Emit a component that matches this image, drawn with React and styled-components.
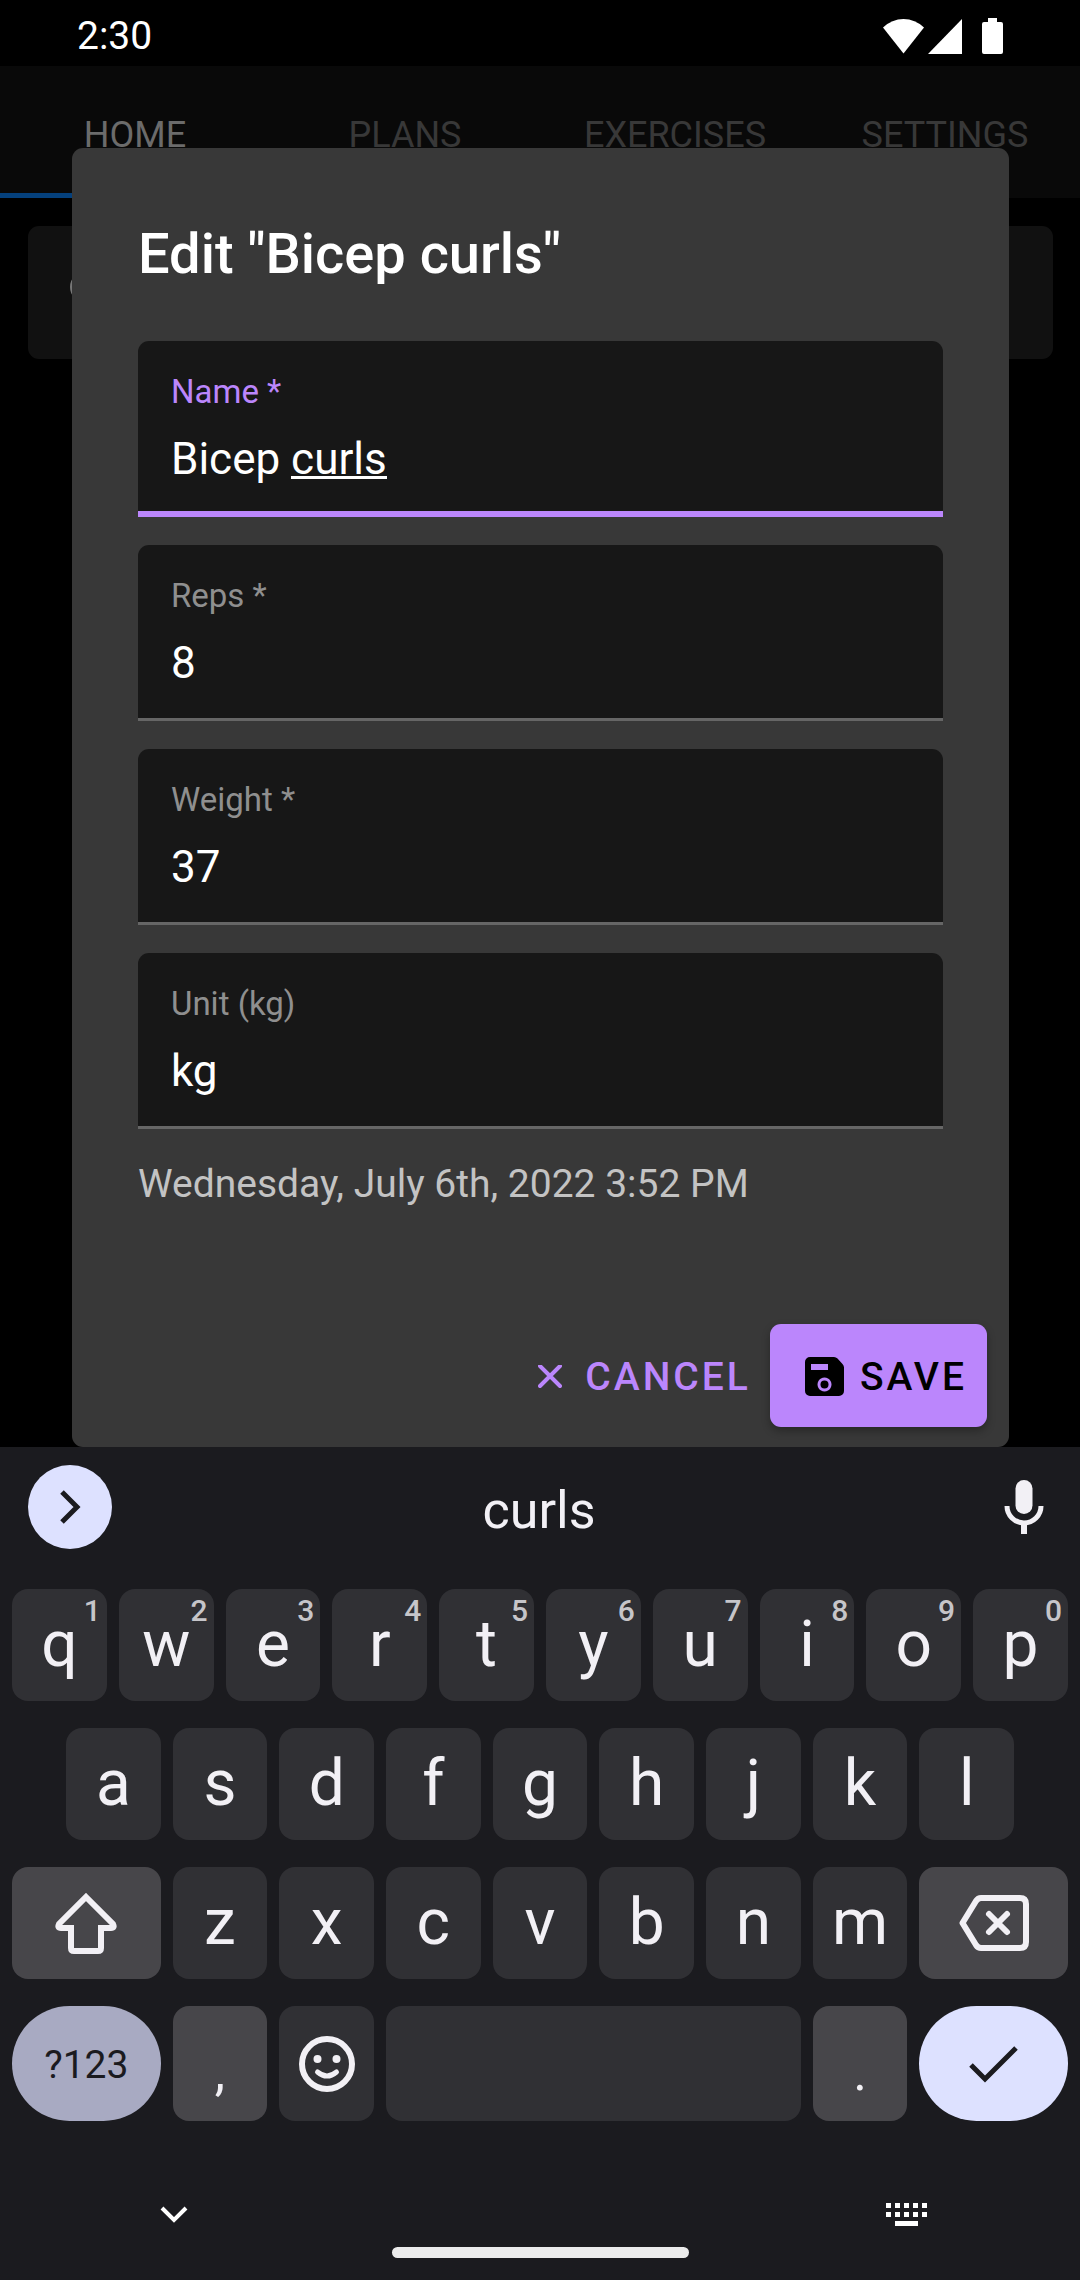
import React from "react";
import styled, { createGlobalStyle, css } from "styled-components";

const ui = `Roboto, "Liberation Sans", sans-serif`;

const Global = createGlobalStyle`
  *, *::before, *::after { box-sizing: border-box; }
  body { margin: 0; background: #000; font-family: ${ui}; }
  button, input { font: inherit; color: inherit; border: 0; padding: 0; margin: 0; background: none; }
  svg { display: block; flex: none; }
`;

const Screen = styled.div`
  display: flex;
  flex-direction: column;
  min-height: 100vh;
  background: #000;
`;

/* Status bar */
const StatusBar = styled.header`
  display: flex;
  align-items: center;
  justify-content: space-between;
  height: 66px;
  padding: 6px 76px 0 77px;
  color: #fff;
`;
const Clock = styled.time`
  font-size: 39px;
  line-height: 48px;
`;
const StatusIcons = styled.div`
  display: flex;
  align-items: center;
  height: 36px;
`;

/* The page and the dialog share one grid cell */
const Workspace = styled.main`
  flex: 1;
  display: grid;
  grid-template-columns: minmax(0, 1fr);
  > * { grid-area: 1 / 1; }
`;
const Page = styled.div`
  display: flex;
  flex-direction: column;
  gap: 28px;
`;
const Tabs = styled.nav`
  display: grid;
  grid-template-columns: repeat(4, 1fr);
  height: 132px;
  background: #090909;
`;
const Tab = styled.a`
  display: flex;
  align-items: center;
  justify-content: center;
  padding-top: 11px;
  border-bottom: 5px solid ${(p) => (p.$active ? "#05417d" : "transparent")};
  color: ${(p) => (p.$active ? "#6b6b6b" : "#383838")};
  font-size: 36px;
  text-decoration: none;
`;
const SearchCard = styled.div`
  display: flex;
  align-items: center;
  height: 133px;
  margin: 0 27px 0 28px;
  padding: 0 42px 10px;
  border-radius: 11px;
  background: #111;
  color: #777;
`;

/* Dialog */
const Dialog = styled.form`
  align-self: end;
  margin: 82px 71px 0 72px;
  padding: 76px 66px 20px;
  border-radius: 11px;
  background: #383838;
  color: #fff;
`;
const Title = styled.h1`
  margin: 0 0 57px;
  font-size: 56px;
  font-weight: 500;
  line-height: 60px;
`;
const Fields = styled.div`
  display: flex;
  flex-direction: column;
  gap: 28px;
`;
const Field = styled.label`
  display: flex;
  flex-direction: column;
  gap: 22px;
  padding: 32px 33px;
  border-radius: 11px 11px 0 0;
  background: #171717;
  box-shadow: inset 0 ${(p) => (p.$active ? "-6px #bb86fc" : "-3px #666")};
`;
const Caption = styled.span`
  color: ${(p) => (p.$active ? "#bb86fc" : "#8f8f8f")};
  font-size: 33px;
  line-height: 38px;
`;
const Control = styled.span`
  position: relative;
  display: block;
  font-size: 44px;
  line-height: 52px;
`;
const TextInput = styled.input`
  display: block;
  width: 100%;
  height: 52px;
  color: #fff;
  outline: none;
`;
const Composing = styled.span`
  position: absolute;
  inset: 0;
  color: transparent;
  white-space: pre;
  pointer-events: none;
  u {
    text-decoration: none;
    display: inline-block;
    height: 46px;
    border-bottom: 3px solid #fff;
  }
`;
const Timestamp = styled.p`
  margin: 31px 0 116px;
  color: #c3c3c3;
  font-size: 39px;
  line-height: 48px;
`;
const Actions = styled.div`
  display: flex;
  justify-content: flex-end;
  margin-right: -44px;
`;
const Action = styled.button`
  display: flex;
  align-items: center;
  height: 103px;
  border-radius: 11px;
  font-size: 39px;
  font-weight: 500;
  letter-spacing: 3px;
  ${(p) =>
    p.$filled
      ? css`
          gap: 16px;
          padding: 2px 20px 0 35px;
          background: #bb86fc;
          color: #000;
          box-shadow: 0 4px 8px rgba(0, 0, 0, 0.3);
        `
      : css`
          gap: 23px;
          padding: 2px 19px 0;
          color: #bb86fc;
        `}
`;

/* Keyboard */
const Keyboard = styled.section`
  display: flex;
  flex-direction: column;
  background: #1b1b1f;
  color: #f2f0f5;
`;
const Suggestions = styled.div`
  display: grid;
  grid-template-columns: 84px 1fr 84px;
  align-items: center;
  height: 142px;
  padding: 0 14px 22px 28px;
`;
const Expand = styled.button`
  display: grid;
  place-items: center;
  width: 84px;
  height: 84px;
  border-radius: 50%;
  background: #dde1ff;
  color: #1b1b1f;
`;
const Suggestion = styled.button`
  padding: 8px 16px 0 0;
  font-size: 52px;
  line-height: 60px;
`;
const Mic = styled.button`
  display: grid;
  place-items: center;
`;
const Rows = styled.div`
  display: flex;
  flex-direction: column;
  gap: 27px;
  padding: 0 12px;
`;
const Row = styled.div`
  display: flex;
  gap: 12px;
  height: ${(p) => (p.$tall ? 115 : 112)}px;
  padding: 0 ${(p) => (p.$inset ? 54 : 0)}px;
`;
const tones = {
  plain: css`background: #303034; color: #f2f0f5;`,
  grey: css`background: #47464a; color: #f2f0f5;`,
  mode: css`background: #a8aac2; color: #1b1b1f; border-radius: 58px;`,
  enter: css`background: #dde1ff; color: #1b1b1f; border-radius: 58px;`,
};
const Key = styled.button`
  position: relative;
  display: flex;
  align-items: center;
  justify-content: center;
  flex: ${(p) => p.$grow || 1} 1 ${(p) => (p.$space ? 36 : 0)}px;
  min-width: 0;
  border-radius: 16px;
  font-size: 64px;
  line-height: 72px;
  ${(p) => p.$small && css`padding-top: 3px; font-size: 39px;`}
  ${(p) => p.$low && css`padding-top: 18px; font-size: 52px;`}
  ${(p) => tones[p.$tone || "plain"]}
`;
const Hint = styled.sup`
  position: absolute;
  top: 4px;
  right: 6px;
  color: #c6c5c9;
  font-size: 30px;
  font-weight: 500;
  line-height: 36px;
`;
const NavBar = styled.footer`
  display: grid;
  grid-template-columns: 347px 1fr 347px;
  height: 159px;
  padding-top: 70px;
`;
const NavButton = styled.button`
  display: grid;
  place-items: center;
  height: 48px;
  color: #fff;
`;
const HomeHandle = styled.div`
  align-self: end;
  justify-self: center;
  width: 297px;
  height: 11px;
  margin-bottom: 22px;
  border-radius: 6px;
  background: #ececec;
`;

const fields = [
  { id: "name", label: "Name *", value: "Bicep curls", active: true, done: "Bicep ", composing: "curls" },
  { id: "reps", label: "Reps *", value: "8" },
  { id: "weight", label: "Weight *", value: "37" },
  { id: "unit", label: "Unit (kg)", value: "kg" },
];

const line = { fill: "none", stroke: "currentColor" };

export default function App() {
  return (
    <>
      <Global />
      <Screen>
        <StatusBar>
          <Clock>2:30</Clock>
          <StatusIcons>
            <svg width="121" height="36" viewBox="0 0 121 36" fill="currentColor">
              <path d="M0 9.5Q9 1 20.5 1T41 9.5L20.5 35.5Z" />
              <path d="M45 36L79 1V36Z" />
              <path d="M105 0h9v4h4a2 2 0 0 1 2 2v28a2 2 0 0 1-2 2h-17a2 2 0 0 1-2-2V6a2 2 0 0 1 2-2h4z" />
            </svg>
          </StatusIcons>
        </StatusBar>

        <Workspace>
          <Page>
            <Tabs>
              <Tab href="#home" $active>HOME</Tab>
              <Tab href="#plans">PLANS</Tab>
              <Tab href="#exercises">EXERCISES</Tab>
              <Tab href="#settings">SETTINGS</Tab>
            </Tabs>
            <SearchCard>
              <svg width="40" height="40" viewBox="0 0 40 40" {...line} strokeWidth="4">
                <circle cx="16" cy="19" r="14" />
                <path d="M26 29L37 40" />
              </svg>
            </SearchCard>
          </Page>

          <Dialog onSubmit={(e) => e.preventDefault()}>
            <Title>Edit "Bicep curls"</Title>
            <Fields>
              {fields.map((f) => (
                <Field key={f.id} htmlFor={f.id} $active={f.active}>
                  <Caption $active={f.active}>{f.label}</Caption>
                  <Control>
                    <TextInput id={f.id} defaultValue={f.value} spellCheck={false} />
                    {f.composing && (
                      <Composing aria-hidden="true">
                        {f.done}
                        <u>{f.composing}</u>
                      </Composing>
                    )}
                  </Control>
                </Field>
              ))}
            </Fields>
            <Timestamp>Wednesday, July 6th, 2022 3:52 PM</Timestamp>
            <Actions>
              <Action type="button">
                <svg width="24" height="24" viewBox="0 0 24 24" {...line} strokeWidth="4" strokeLinecap="round">
                  <path d="M2 1L22 21M22 1L2 21" />
                </svg>
                CANCEL
              </Action>
              <Action type="submit" $filled>
                <svg width="39" height="39" viewBox="0 0 39 39" fill="currentColor">
                  <path
                    fillRule="evenodd"
                    d="M5 0H29Q31 0 32.500 1.500L37.500 7Q39 8.500 39 10.500V34A5 5 0 0 1 34 39H5A5 5 0 0 1 0 34V5A5 5 0 0 1 5 0ZM6 7V13H23V7ZM19.500 20.500a7 7 0 1 0 .01 0Z"
                  />
                  <circle cx="19.500" cy="27.500" r="4" />
                </svg>
                SAVE
              </Action>
            </Actions>
          </Dialog>
        </Workspace>

        <Keyboard>
          <Suggestions>
            <Expand aria-label="More">
              <svg width="34" height="34" viewBox="0 0 34 34" {...line} strokeWidth="5">
                <path d="M9 2L24 17L9 32" />
              </svg>
            </Expand>
            <Suggestion>curls</Suggestion>
            <Mic aria-label="Voice input">
              <svg width="40" height="54" viewBox="0 0 40 54" fill="currentColor">
                <rect x="11.500" y="0" width="17" height="34" rx="8.500" />
                <path d="M3 26a17 17 0 0 0 34 0" {...line} strokeWidth="5" />
                <rect x="17" y="43" width="6" height="11" />
              </svg>
            </Mic>
          </Suggestions>

          <Rows>
            <Row>
              {[..."qwertyuiop"].map((c, i) => (
                <Key key={c}>
                  {c}
                  <Hint>{(i + 1) % 10}</Hint>
                </Key>
              ))}
            </Row>
            <Row $inset>
              {[..."asdfghjkl"].map((c) => (
                <Key key={c}>{c}</Key>
              ))}
            </Row>
            <Row>
              <Key $grow={1.57} $tone="grey" aria-label="Shift">
                <svg width="62" height="62" viewBox="0 0 62 62" {...line} strokeWidth="6" strokeLinejoin="round">
                  <path d="M31 5L58 32Q60 36 56 36H46V56Q46 59 43 59H19Q16 59 16 56V36H6Q2 36 4 32Z" strokeLinejoin="miter" />
                </svg>
              </Key>
              {[..."zxcvbnm"].map((c) => (
                <Key key={c}>{c}</Key>
              ))}
              <Key $grow={1.57} $tone="grey" aria-label="Backspace">
                <svg width="70" height="56" viewBox="0 0 70 56" {...line} strokeWidth="6" strokeLinejoin="round">
                  <path d="M3.500 28L17 6Q19 3 22 3H61Q67 3 67 9V47Q67 53 61 53H22Q19 53 17 50Z" />
                  <path d="M30 19L48 37M48 19L30 37" strokeLinecap="round" />
                </svg>
              </Key>
            </Row>
            <Row $tall>
              <Key $grow={1.57} $tone="mode" $small>?123</Key>
              <Key $tone="grey" $low>,</Key>
              <Key aria-label="Emoji">
                <svg width="56" height="56" viewBox="0 0 56 56" {...line} strokeWidth="6">
                  <circle cx="28" cy="28" r="25" />
                  <circle cx="18.500" cy="23" r="4" fill="currentColor" stroke="none" />
                  <circle cx="37.500" cy="23" r="4" fill="currentColor" stroke="none" />
                  <path d="M18.500 36Q28 44 37.500 36" strokeWidth="5" strokeLinecap="round" />
                </svg>
              </Key>
              <Key $grow={4} $space aria-label="Space" />
              <Key $tone="grey" $low>.</Key>
              <Key $grow={1.57} $tone="enter" aria-label="Done">
                <svg width="50" height="40" viewBox="0 0 50 40" {...line} strokeWidth="5">
                  <path d="M2 21L16 35L47 4" />
                </svg>
              </Key>
            </Row>
          </Rows>

          <NavBar>
            <NavButton aria-label="Hide keyboard">
              <svg width="28" height="18" viewBox="0 0 28 18" {...line} strokeWidth="4">
                <path d="M2 2L14 14L26 2" />
              </svg>
            </NavButton>
            <HomeHandle />
            <NavButton aria-label="Switch keyboard">
              <svg width="42" height="24" viewBox="0 0 42 24" fill="currentColor">
                {[0, 9, 18, 27, 36].map((x) => (
                  <path key={x} d={`M${x} 0h5v5h-5zM${x} 9h5v5h-5z`} />
                ))}
                <rect x="9" y="18" width="23" height="5" />
              </svg>
            </NavButton>
          </NavBar>
        </Keyboard>
      </Screen>
    </>
  );
}
